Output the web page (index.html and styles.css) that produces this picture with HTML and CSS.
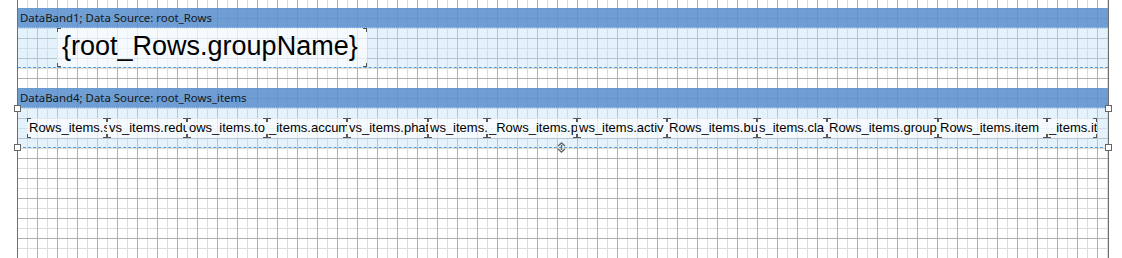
FILE: index.html
```html
<!DOCTYPE html>
<html lang="en">
<head>
    <meta charset="UTF-8">
    <title>Report Designer - Page</title>
    <link rel="stylesheet" href="styles.css">
</head>
<body>

    <div class="page">

        <!-- DataBand1 -->
        <div class="band">
            <div class="band-header">DataBand1; Data Source: root_Rows</div>
            <div class="band-body">
                <div class="textbox big">{root_Rows.groupName}</div>
            </div>
        </div>

        <!-- DataBand4 (selected) -->
        <div class="band band-gap">
            <div class="band-header">DataBand4; Data Source: root_Rows_items</div>
            <div class="band-body selected">
                <div class="cells">
                    <div class="cell w80">Rows_items.s</div>
                    <div class="cell w80">vs_items.redu</div>
                    <div class="cell w80">ows_items.to</div>
                    <div class="cell w80">_items.accum</div>
                    <div class="cell w81">vs_items.phat</div>
                    <div class="cell w59">ws_items._</div>
                    <div class="cell w90">_Rows_items.p</div>
                    <div class="cell w90">ws_items.activ</div>
                    <div class="cell w90">Rows_items.bu</div>
                    <div class="cell w70">s_items.cla</div>
                    <div class="cell w111">Rows_items.group</div>
                    <div class="cell w109">Rows_items.item</div>
                    <div class="cell w50">_items.it</div>
                </div>
                <span class="handle tl"></span>
                <span class="handle bl"></span>
                <span class="handle tr"></span>
                <span class="handle br"></span>
                <svg class="resize" width="9" height="11" viewBox="0 0 9 11">
                    <path d="M1 4 L4.5 1 L8 4 M1 7 L4.5 10 L8 7" fill="none" stroke="#666" stroke-width="1.4"/>
                    <path d="M4.5 3 V8" stroke="#666" stroke-width="1.4"/>
                </svg>
            </div>
        </div>

    </div>

</body>
</html>
```

FILE: styles.css
```css
body {
    margin: 0;
    background-color: #fff;
    font-family: "Liberation Sans", Arial, sans-serif;
    color: #000;
}

/* report page with design grid */
.page {
    margin-left: 17px;
    width: 1092px;
    height: 258px;
    padding-top: 8px;
    box-sizing: border-box;
    border-left: 1px solid #6e6e6e;
    border-right: 1px solid #6e6e6e;
    background-color: #fff;
    background-image:
        linear-gradient(to right, #b0b0b0 1px, transparent 1px),
        linear-gradient(to bottom, #b0b0b0 1px, transparent 1px),
        linear-gradient(to right, #dcdcdc 1px, transparent 1px),
        linear-gradient(to bottom, #dcdcdc 1px, transparent 1px);
    background-size: 20px 20px, 20px 20px, 10px 10px, 10px 10px;
    background-position: 19px 0, 0 18px, 9px 0, 0 8px;
}

.band-gap {
    margin-top: 20px;
}

.band-header {
    height: 20px;
    line-height: 20px;
    padding-left: 2px;
    font-family: "Noto Sans", "Open Sans", sans-serif;
    font-size: 11.4px;
    color: #161616;
    background-color: rgba(90, 145, 205, 0.88);
    border-bottom: 1px dotted rgba(255, 255, 255, 0.35);
    box-sizing: border-box;
}

.band-body {
    position: relative;
    height: 40px;
    box-sizing: border-box;
    background-color: rgba(190, 225, 245, 0.42);
    border-bottom: 1px dashed #5b9bd5;
}

.textbox {
    background-color: rgba(255, 255, 255, 0.6);
    background-image:
        linear-gradient(#555, #555), linear-gradient(#555, #555),
        linear-gradient(#555, #555), linear-gradient(#555, #555),
        linear-gradient(#555, #555), linear-gradient(#555, #555),
        linear-gradient(#555, #555), linear-gradient(#555, #555);
    background-size: 4px 1px, 1px 4px, 4px 1px, 1px 4px, 4px 1px, 1px 4px, 4px 1px, 1px 4px;
    background-position: left top, left top, right top, right top, left bottom, left bottom, right bottom, right bottom;
    background-repeat: no-repeat;
}

.big {
    margin-left: 39px;
    width: 310px;
    height: 39px;
    box-sizing: border-box;
    padding-left: 5px;
    font-size: 27px;
    line-height: 36px;
    white-space: nowrap;
}

.cells {
    display: flex;
    margin-left: 9px;
    padding-top: 10px;
}

.cell {
    height: 20px;
    line-height: 20px;
    padding-left: 2px;
    box-sizing: border-box;
    font-size: 13px;
    white-space: nowrap;
    overflow: hidden;
    background-color: rgba(255, 255, 255, 0.6);
    background-image:
        linear-gradient(#555, #555), linear-gradient(#555, #555),
        linear-gradient(#555, #555), linear-gradient(#555, #555),
        linear-gradient(#555, #555), linear-gradient(#555, #555),
        linear-gradient(#555, #555), linear-gradient(#555, #555);
    background-size: 4px 1px, 1px 4px, 4px 1px, 1px 4px, 4px 1px, 1px 4px, 4px 1px, 1px 4px;
    background-position: left top, left top, right top, right top, left bottom, left bottom, right bottom, right bottom;
    background-repeat: no-repeat;
}

.w50 { width: 50px; }
.w59 { width: 59px; }
.w70 { width: 70px; }
.w80 { width: 80px; }
.w81 { width: 81px; }
.w90 { width: 90px; }
.w109 { width: 109px; }
.w111 { width: 111px; }

/* selection handles */
.handle {
    position: absolute;
    width: 5px;
    height: 5px;
    background-color: #fff;
    border: 1px solid #666;
}

.handle.tl { left: -4px; top: -3px; }
.handle.bl { left: -4px; bottom: -4px; }
.handle.tr { right: -4px; top: -3px; }
.handle.br { right: -4px; bottom: -4px; }

.resize {
    position: absolute;
    left: 539px;
    bottom: -6px;
}
```
